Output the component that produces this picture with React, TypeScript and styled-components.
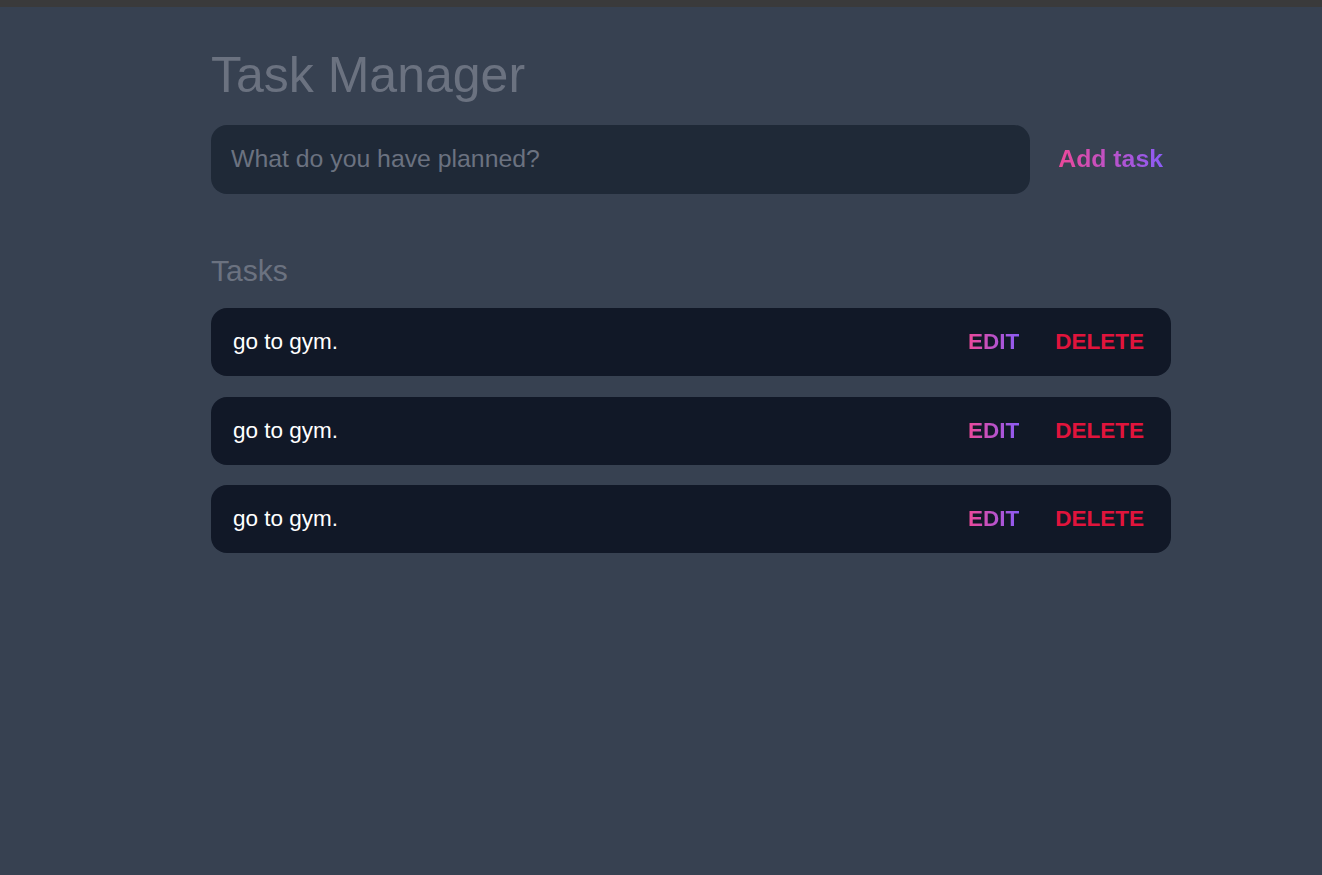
import React, { useState } from "react";
import styled, { createGlobalStyle } from "styled-components";

const GlobalStyle = createGlobalStyle`
  html, body {
    margin: 0;
    padding: 0;
    background: #374151;
    font-family: "Liberation Sans", Arial, sans-serif;
  }
  * { box-sizing: border-box; }
`;

const TopBar = styled.div`
  height: 7px;
  background: #3a3a3b;
`;

const Page = styled.div`
  min-height: 868px;
  background: #374151;
  padding: 44px 0 0 211px;
`;

const Container = styled.div`
  width: 960px;
  display: flex;
  flex-direction: column;
`;

const Title = styled.h1`
  margin: 0;
  font-size: 50px;
  line-height: 48px;
  font-weight: 400;
  color: #6b7280;
`;

const Form = styled.form`
  margin-top: 26px;
  display: flex;
  align-items: center;
`;

const Input = styled.input`
  flex: 1;
  height: 68.5px;
  border: none;
  outline: none;
  border-radius: 16px;
  background: #1f2937;
  padding: 0 20px;
  font-family: "Liberation Sans", Arial, sans-serif;
  font-size: 24.8px;
  color: #e5e7eb;
  &::placeholder {
    color: #6b7280;
  }
`;

const GradientButton = styled.button<{ $size: number }>`
  border: none;
  background: linear-gradient(90deg, #ec4899, #8b5cf6);
  -webkit-background-clip: text;
  background-clip: text;
  color: transparent;
  font-family: "Liberation Sans", Arial, sans-serif;
  font-weight: 700;
  font-size: ${(p) => p.$size}px;
  cursor: pointer;
  padding: 0;
`;

const AddButton = styled(GradientButton)`
  margin-left: 28px;
  margin-right: 8px;
`;

const SectionLabel = styled.h2`
  margin: 63.5px 0 23px;
  font-size: 30px;
  line-height: 28px;
  font-weight: 400;
  color: #6b7280;
`;

const List = styled.div`
  display: flex;
  flex-direction: column;
  gap: 20.5px;
`;

const Row = styled.div`
  height: 68px;
  border-radius: 16px;
  background: #111827;
  display: flex;
  align-items: center;
  padding: 0 27px 0 22px;
`;

const TaskText = styled.span`
  flex: 1;
  font-size: 22.5px;
  color: #ffffff;
`;

const Actions = styled.div`
  display: flex;
  align-items: center;
  gap: 36px;
`;

const DeleteButton = styled.button`
  border: none;
  background: none;
  padding: 0;
  font-family: "Liberation Sans", Arial, sans-serif;
  font-weight: 700;
  font-size: 22.5px;
  color: #e0143c;
  cursor: pointer;
`;

export default function App() {
  const [value, setValue] = useState("");
  const tasks = ["go to gym.", "go to gym.", "go to gym."];
  return (
    <>
      <GlobalStyle />
      <TopBar />
      <Page>
        <Container>
          <Title>Task Manager</Title>
          <Form onSubmit={(e) => e.preventDefault()}>
            <Input
              placeholder="What do you have planned?"
              value={value}
              onChange={(e) => setValue(e.target.value)}
            />
            <AddButton $size={24.8} type="submit">
              Add task
            </AddButton>
          </Form>
          <SectionLabel>Tasks</SectionLabel>
          <List>
            {tasks.map((t, i) => (
              <Row key={i}>
                <TaskText>{t}</TaskText>
                <Actions>
                  <GradientButton $size={22.5}>EDIT</GradientButton>
                  <DeleteButton>DELETE</DeleteButton>
                </Actions>
              </Row>
            ))}
          </List>
        </Container>
      </Page>
    </>
  );
}
